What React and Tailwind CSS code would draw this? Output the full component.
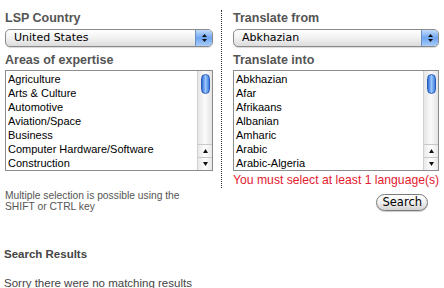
import React from "react";

const areas = [
  "Agriculture",
  "Arts & Culture",
  "Automotive",
  "Aviation/Space",
  "Business",
  "Computer Hardware/Software",
  "Construction",
];

const languages = [
  "Abkhazian",
  "Afar",
  "Afrikaans",
  "Albanian",
  "Amharic",
  "Arabic",
  "Arabic-Algeria",
];

function AquaSelect({ value }) {
  return (
    <div className="flex h-[18px] items-stretch rounded-[5px] border border-[#8a8a8a] bg-gradient-to-b from-[#ffffff] via-[#f1f1f1] to-[#dcdcdc] shadow-[0_1px_1px_rgba(0,0,0,0.15)]">
      <div className="flex-1 pl-[8px] text-[11px] leading-[16px] text-black font-['DejaVu_Sans',sans-serif]">
        {value}
      </div>
      <div className="flex w-[17px] flex-col items-center justify-center rounded-r-[4px] border-l border-[#6f8fc4] bg-gradient-to-b from-[#c4dcfa] via-[#6ea5f0] to-[#a9cdf8]">
        <svg width="7" height="10" viewBox="0 0 7 10">
          <path d="M3.5 1 L6 4 L1 4 Z" fill="#111" />
          <path d="M3.5 9 L6 6 L1 6 Z" fill="#111" />
        </svg>
      </div>
    </div>
  );
}

function AquaList({ items }) {
  return (
    <div className="flex h-[101px] border border-[#8c8c8c] bg-white">
      <div className="flex-1 pl-[2px] pt-[1px] text-[11px] leading-[14px] text-black font-['Liberation_Sans',Arial,sans-serif]">
        {items.map((it) => (
          <div key={it}>{it}</div>
        ))}
      </div>
      <div className="flex w-[15px] flex-col border-l border-[#d0d0d0] bg-gradient-to-r from-[#e6e6e6] via-[#fafafa] to-[#e4e4e4]">
        <div className="flex flex-1 justify-center pt-[3px]">
          <div className="h-[20px] w-[9px] rounded-full border border-[#2a5bb8] bg-gradient-to-r from-[#2f6fd8] via-[#9cc6fb] to-[#3d7fe0]" />
        </div>
        <div className="flex h-[13px] items-center justify-center border-t border-[#c8c8c8] bg-gradient-to-r from-[#e8e8e8] via-white to-[#e8e8e8]">
          <svg width="5" height="4" viewBox="0 0 5 4">
            <path d="M2.5 0 L5 4 L0 4 Z" fill="#111" />
          </svg>
        </div>
        <div className="flex h-[13px] items-center justify-center border-t border-[#c8c8c8] bg-gradient-to-r from-[#e8e8e8] via-white to-[#e8e8e8]">
          <svg width="5" height="4" viewBox="0 0 5 4">
            <path d="M2.5 4 L5 0 L0 0 Z" fill="#111" />
          </svg>
        </div>
      </div>
    </div>
  );
}

function Label({ children }) {
  return (
    <div className="text-[12.5px] font-bold leading-[16px] text-[#555] font-['Liberation_Sans',Arial,sans-serif]">
      {children}
    </div>
  );
}

export default function App() {
  return (
    <div className="h-[288px] w-[444px] overflow-hidden bg-white font-['Liberation_Sans',Arial,sans-serif]">
      <div className="flex items-start pt-[10px]">
        {/* left column */}
        <div className="ml-[5px] w-[208px]">
          <Label>LSP Country</Label>
          <div className="mt-[3px]">
            <AquaSelect value="United States" />
          </div>
          <div className="mt-[5px]">
            <Label>Areas of expertise</Label>
          </div>
          <div className="mt-[2px]">
            <AquaList items={areas} />
          </div>
        </div>
        {/* right column */}
        <div className="ml-[8px] w-[219px] border-l border-dotted border-[#333] pl-[11px]">
          <Label>Translate from</Label>
          <div className="mt-[3px] w-[206px]">
            <AquaSelect value="Abkhazian" />
          </div>
          <div className="mt-[5px]">
            <Label>Translate into</Label>
          </div>
          <div className="mt-[2px] w-[206px]">
            <AquaList items={languages} />
          </div>
          <div className="mt-[1px] whitespace-nowrap text-[12.2px] leading-[16px] text-[#e3202f]">
            You must select at least 1 language(s)
          </div>
        </div>
      </div>

      <div className="flex items-start">
        <div className="ml-[5px] mt-[2px] text-[10.3px] leading-[11px] text-[#555]">
          Multiple selection is possible using the
          <br />
          SHIFT or CTRL key
        </div>
        <div className="ml-auto mr-[16px] mt-[1px]">
          <button className="h-[17px] rounded-full border border-[#7a7a7a] bg-gradient-to-b from-[#ffffff] via-[#efefef] to-[#d2d2d2] px-[5px] text-[11.5px] leading-[14px] text-black font-['DejaVu_Sans',sans-serif] shadow-[0_1px_1px_rgba(0,0,0,0.2)]">
            Search
          </button>
        </div>
      </div>

      <div className="ml-[4px] mt-[33px] text-[11.5px] font-bold leading-[16px] text-[#444]">
        Search Results
      </div>
      <div className="ml-[4px] mt-[13px] text-[11.5px] leading-[16px] text-[#444]">
        Sorry there were no matching results
      </div>
    </div>
  );
}
